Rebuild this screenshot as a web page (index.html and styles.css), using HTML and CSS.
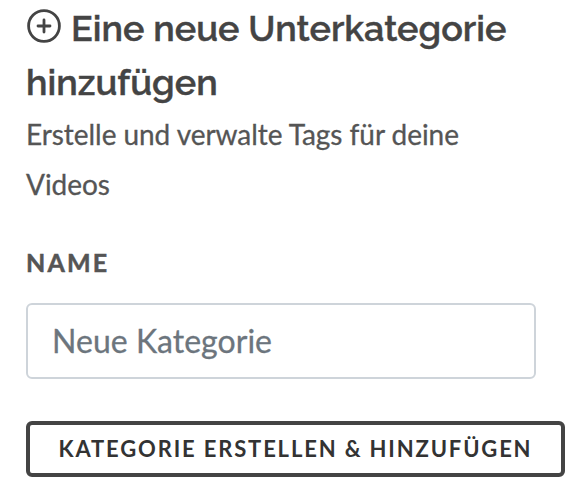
FILE: index.html
```html
<!DOCTYPE html>
<html lang="de">
<head>
<meta charset="utf-8">
<title>Unterkategorie</title>
<link rel="stylesheet" href="styles.css">
</head>
<body>
<main class="panel">
  <h1 class="title"><svg class="title-icon" viewBox="0 0 36 36" aria-hidden="true"><circle cx="18" cy="18" r="15.4"/><path d="M18 12v12M12 18h12"/></svg>Eine neue Unterkategorie<br>hinzufügen</h1>
  <p class="description">Erstelle und verwalte Tags für deine<br>Videos</p>
  <form class="form">
    <label class="label" for="name">Name</label>
    <input class="input" id="name" type="text" placeholder="Neue Kategorie">
    <button class="submit" type="button">Kategorie erstellen &amp; hinzufügen</button>
  </form>
</main>
</body>
</html>
```

FILE: styles.css
```css
* { box-sizing: border-box; }
body { margin: 0; background: #fff; color: #555; font-family: Lato, sans-serif; overflow: hidden; }
.panel { padding: 1px 0 0 26px; }
.title { margin: 0; font: 600 36px/54px Raleway, "Open Sans", sans-serif; color: #444; white-space: nowrap; -webkit-text-stroke: 0.4px #444; }
.title-icon { width: 36px; height: 36px; margin-right: 9px; vertical-align: -3px; fill: none; stroke: currentColor; stroke-width: 2.8; stroke-linecap: round; }
.description { margin: 0; font-size: 28px; line-height: 50px; letter-spacing: -0.05px; white-space: nowrap; -webkit-text-stroke: 0.3px #555; }
.form { display: flex; flex-direction: column; align-items: flex-start; }
.label { margin-top: 37px; font-size: 25px; line-height: 32px; font-weight: 700; letter-spacing: 2.2px; text-transform: uppercase; -webkit-text-stroke: 0.5px #555; }
.input { width: 510px; height: 76px; margin-top: 25px; padding: 0 24px 2px; border: 2px solid #ced4da; border-radius: 6px; font: 32px Lato, sans-serif; color: #444; letter-spacing: 0.03px; }
.input::placeholder { color: #6c757d; opacity: 1; -webkit-text-stroke: 0.3px #6c757d; }
.submit { width: 539px; height: 56px; margin-top: 42px; padding: 0 0 2px; border: 4px solid #444; border-radius: 6px; background: #fff; color: #333; font: 700 22px Lato, sans-serif; letter-spacing: 1.84px; text-transform: uppercase; white-space: nowrap; }
```
